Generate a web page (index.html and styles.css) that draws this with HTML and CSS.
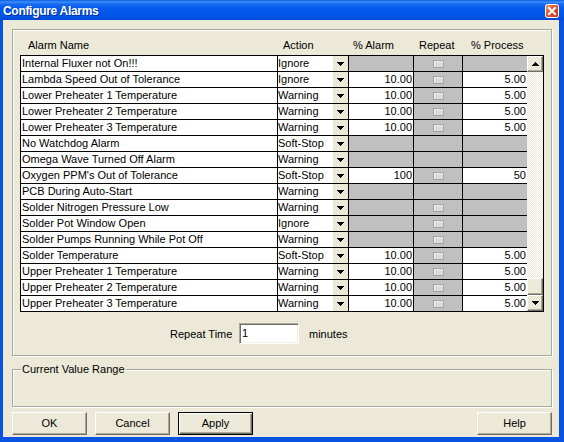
FILE: index.html
```html
<!DOCTYPE html>
<html>
<head>
<meta charset="utf-8">
<title>Configure Alarms</title>
<link rel="stylesheet" href="styles.css">
</head>
<body>
<div class="window">
  <div class="titlebar">
    <span class="title">Configure Alarms</span>
    <span class="close">
      <svg width="14" height="14" viewBox="0 0 14 14">
        <defs>
          <linearGradient id="cg" x1="0" y1="0" x2="1" y2="1">
            <stop offset="0" stop-color="#f29a7c"/>
            <stop offset="0.45" stop-color="#e0532f"/>
            <stop offset="1" stop-color="#c23a12"/>
          </linearGradient>
        </defs>
        <rect x="0.5" y="0.5" width="13" height="13" rx="2" fill="url(#cg)" stroke="#fff"/>
        <path d="M4 4L10 10M10 4L4 10" stroke="#fff" stroke-width="2" stroke-linecap="square"/>
      </svg>
    </span>
  </div>
  <div class="client">
    <div class="group main-group">
      <div class="grid-head">
        <div class="h h-name">Alarm Name</div>
        <div class="h h-action">Action</div>
        <div class="h h-alarm">% Alarm</div>
        <div class="h h-repeat">Repeat</div>
        <div class="h h-process">% Process</div>
      </div>
      <div class="grid">
        <div class="scroll">
          <div class="sb-btn"><svg width="7" height="4" viewBox="0 0 7 4" shape-rendering="crispEdges"><path d="M3 0h1v1h1v1h1v1h1v1h-7v-1h1v-1h1v-1h1z" fill="#000"/></svg></div>
          <div class="sb-track"><div class="sb-thumb"></div></div>
          <div class="sb-btn"><svg width="7" height="4" viewBox="0 0 7 4" shape-rendering="crispEdges"><path d="M0 0h7v1h-1v1h-1v1h-1v1h-1v-1h-1v-1h-1v-1h-1z" fill="#000"/></svg></div>
        </div>

        <div class="c name">Internal Fluxer not On!!!</div>
        <div class="c act"><span>Ignore</span><i class="dd"><svg width="7" height="4" viewBox="0 0 7 4" shape-rendering="crispEdges"><path d="M0 0h7v1h-1v1h-1v1h-1v1h-1v-1h-1v-1h-1v-1h-1z"/></svg></i></div>
        <div class="c g"></div>
        <div class="c rep"><i class="chk"></i></div>
        <div class="c g proc"></div>

        <div class="c name">Lambda Speed Out of Tolerance</div>
        <div class="c act"><span>Ignore</span><i class="dd"><svg width="7" height="4" viewBox="0 0 7 4" shape-rendering="crispEdges"><path d="M0 0h7v1h-1v1h-1v1h-1v1h-1v-1h-1v-1h-1v-1h-1z"/></svg></i></div>
        <div class="c num">10.00</div>
        <div class="c rep"><i class="chk"></i></div>
        <div class="c num proc">5.00</div>

        <div class="c name">Lower Preheater 1 Temperature</div>
        <div class="c act"><span>Warning</span><i class="dd"><svg width="7" height="4" viewBox="0 0 7 4" shape-rendering="crispEdges"><path d="M0 0h7v1h-1v1h-1v1h-1v1h-1v-1h-1v-1h-1v-1h-1z"/></svg></i></div>
        <div class="c num">10.00</div>
        <div class="c rep"><i class="chk"></i></div>
        <div class="c num proc">5.00</div>

        <div class="c name">Lower Preheater 2 Temperature</div>
        <div class="c act"><span>Warning</span><i class="dd"><svg width="7" height="4" viewBox="0 0 7 4" shape-rendering="crispEdges"><path d="M0 0h7v1h-1v1h-1v1h-1v1h-1v-1h-1v-1h-1v-1h-1z"/></svg></i></div>
        <div class="c num">10.00</div>
        <div class="c rep"><i class="chk"></i></div>
        <div class="c num proc">5.00</div>

        <div class="c name">Lower Preheater 3 Temperature</div>
        <div class="c act"><span>Warning</span><i class="dd"><svg width="7" height="4" viewBox="0 0 7 4" shape-rendering="crispEdges"><path d="M0 0h7v1h-1v1h-1v1h-1v1h-1v-1h-1v-1h-1v-1h-1z"/></svg></i></div>
        <div class="c num">10.00</div>
        <div class="c rep"><i class="chk"></i></div>
        <div class="c num proc">5.00</div>

        <div class="c name">No Watchdog Alarm</div>
        <div class="c act"><span>Soft-Stop</span><i class="dd"><svg width="7" height="4" viewBox="0 0 7 4" shape-rendering="crispEdges"><path d="M0 0h7v1h-1v1h-1v1h-1v1h-1v-1h-1v-1h-1v-1h-1z"/></svg></i></div>
        <div class="c g"></div>
        <div class="c rep"></div>
        <div class="c g proc"></div>

        <div class="c name">Omega Wave Turned Off Alarm</div>
        <div class="c act"><span>Warning</span><i class="dd"><svg width="7" height="4" viewBox="0 0 7 4" shape-rendering="crispEdges"><path d="M0 0h7v1h-1v1h-1v1h-1v1h-1v-1h-1v-1h-1v-1h-1z"/></svg></i></div>
        <div class="c g"></div>
        <div class="c rep"></div>
        <div class="c g proc"></div>

        <div class="c name">Oxygen PPM's Out of Tolerance</div>
        <div class="c act"><span>Soft-Stop</span><i class="dd"><svg width="7" height="4" viewBox="0 0 7 4" shape-rendering="crispEdges"><path d="M0 0h7v1h-1v1h-1v1h-1v1h-1v-1h-1v-1h-1v-1h-1z"/></svg></i></div>
        <div class="c num">100</div>
        <div class="c rep"><i class="chk"></i></div>
        <div class="c num proc">50</div>

        <div class="c name">PCB During Auto-Start</div>
        <div class="c act"><span>Warning</span><i class="dd"><svg width="7" height="4" viewBox="0 0 7 4" shape-rendering="crispEdges"><path d="M0 0h7v1h-1v1h-1v1h-1v1h-1v-1h-1v-1h-1v-1h-1z"/></svg></i></div>
        <div class="c g"></div>
        <div class="c rep"></div>
        <div class="c g proc"></div>

        <div class="c name">Solder Nitrogen Pressure Low</div>
        <div class="c act"><span>Warning</span><i class="dd"><svg width="7" height="4" viewBox="0 0 7 4" shape-rendering="crispEdges"><path d="M0 0h7v1h-1v1h-1v1h-1v1h-1v-1h-1v-1h-1v-1h-1z"/></svg></i></div>
        <div class="c g"></div>
        <div class="c rep"><i class="chk"></i></div>
        <div class="c g proc"></div>

        <div class="c name">Solder Pot Window Open</div>
        <div class="c act"><span>Ignore</span><i class="dd"><svg width="7" height="4" viewBox="0 0 7 4" shape-rendering="crispEdges"><path d="M0 0h7v1h-1v1h-1v1h-1v1h-1v-1h-1v-1h-1v-1h-1z"/></svg></i></div>
        <div class="c g"></div>
        <div class="c rep"><i class="chk"></i></div>
        <div class="c g proc"></div>

        <div class="c name">Solder Pumps Running While Pot Off</div>
        <div class="c act"><span>Warning</span><i class="dd"><svg width="7" height="4" viewBox="0 0 7 4" shape-rendering="crispEdges"><path d="M0 0h7v1h-1v1h-1v1h-1v1h-1v-1h-1v-1h-1v-1h-1z"/></svg></i></div>
        <div class="c g"></div>
        <div class="c rep"><i class="chk"></i></div>
        <div class="c g proc"></div>

        <div class="c name">Solder Temperature</div>
        <div class="c act"><span>Soft-Stop</span><i class="dd"><svg width="7" height="4" viewBox="0 0 7 4" shape-rendering="crispEdges"><path d="M0 0h7v1h-1v1h-1v1h-1v1h-1v-1h-1v-1h-1v-1h-1z"/></svg></i></div>
        <div class="c num">10.00</div>
        <div class="c rep"><i class="chk"></i></div>
        <div class="c num proc">5.00</div>

        <div class="c name">Upper Preheater 1 Temperature</div>
        <div class="c act"><span>Warning</span><i class="dd"><svg width="7" height="4" viewBox="0 0 7 4" shape-rendering="crispEdges"><path d="M0 0h7v1h-1v1h-1v1h-1v1h-1v-1h-1v-1h-1v-1h-1z"/></svg></i></div>
        <div class="c num">10.00</div>
        <div class="c rep"><i class="chk"></i></div>
        <div class="c num proc">5.00</div>

        <div class="c name">Upper Preheater 2 Temperature</div>
        <div class="c act"><span>Warning</span><i class="dd"><svg width="7" height="4" viewBox="0 0 7 4" shape-rendering="crispEdges"><path d="M0 0h7v1h-1v1h-1v1h-1v1h-1v-1h-1v-1h-1v-1h-1z"/></svg></i></div>
        <div class="c num">10.00</div>
        <div class="c rep"><i class="chk"></i></div>
        <div class="c num proc">5.00</div>

        <div class="c name">Upper Preheater 3 Temperature</div>
        <div class="c act"><span>Warning</span><i class="dd"><svg width="7" height="4" viewBox="0 0 7 4" shape-rendering="crispEdges"><path d="M0 0h7v1h-1v1h-1v1h-1v1h-1v-1h-1v-1h-1v-1h-1z"/></svg></i></div>
        <div class="c num">10.00</div>
        <div class="c rep"><i class="chk"></i></div>
        <div class="c num proc">5.00</div>
      </div>
      <div class="repeat-row">
        <span class="rt-label">Repeat Time</span>
        <span class="input">1</span>
        <span class="rt-unit">minutes</span>
      </div>
    </div>
    <fieldset class="range">
      <legend>Current Value Range</legend>
      <div class="range-body"></div>
    </fieldset>
    <div class="buttons">
      <div class="btn">OK</div>
      <div class="btn">Cancel</div>
      <div class="btn default">Apply</div>
      <div class="btn help">Help</div>
    </div>
  </div>
</div>
</body>
</html>
```

FILE: styles.css
```css
* { box-sizing: border-box; }
html, body { margin: 0; padding: 0; }
body {
  width: 564px;
  height: 442px;
  overflow: hidden;
  font-family: "Liberation Sans", Arial, sans-serif;
  font-size: 11px;
  color: #000;
  background: #0a50e0;
}
.window {
  width: 564px;
  height: 442px;
  display: flex;
  flex-direction: column;
  background: #0a52e2;
}
.titlebar {
  height: 20px;
  flex: none;
  display: flex;
  align-items: center;
  padding: 0 5px 0 3px;
  background: linear-gradient(to bottom, #0a5fe6 0px, #3d8ef7 2px, #1a6af0 4px, #0058ee 9px, #0055e8 16px, #0048d6 20px);
}
.title {
  flex: 1;
  color: #fff;
  font-weight: bold;
  font-size: 12px;
  letter-spacing: -0.3px;
  line-height: 20px;
  padding-top: 1px;
  text-shadow: 1px 1px 0 rgba(0, 20, 110, 0.6);
}
.close { display: flex; width: 14px; height: 14px; margin-top: 1px; }
.client {
  flex: 1;
  margin: 0 5px 5px 3px;
  background: #ece9d8;
  padding: 9px 0 0 9px;
}
.group {
  border: 1px solid #aca899;
  box-shadow: 1px 1px 0 #fff, inset 1px 1px 0 #fff;
}
.main-group {
  width: 540px;
  height: 327px;
  padding: 0 0 0 7px;
}
.grid-head {
  display: grid;
  grid-template-columns: 258px 71px 65px 49px 81px;
  height: 25px;
  padding-top: 7px;
  line-height: 17px;
}
.h-name { padding-left: 8px; }
.h-action { padding-left: 5px; }
.h-alarm { padding-left: 4px; }
.h-repeat { padding-left: 5px; }
.h-process { padding-left: 8px; }

.grid {
  display: grid;
  width: 524px;
  grid-template-columns: 257px 71px 65px 49px 64px 16px;
  grid-auto-rows: 16px;
  border: 1px solid #000;
  border-bottom: 0;
}
.c {
  border-right: 1px solid #000;
  border-bottom: 1px solid #000;
  line-height: 15px;
  white-space: nowrap;
  overflow: hidden;
  background: #fff;
}
.name { padding-left: 1px; }
.act { display: flex; }
.act span { flex: 1; }
.dd {
  width: 15px;
  height: 15px;
  background: #ece9d8;
  display: flex;
  align-items: center;
  justify-content: center;
}
.num { text-align: right; padding-right: 1px; }
.g { background: #c0c0c0; }
.rep {
  background: #c0c0c0;
  display: flex;
  align-items: center;
  justify-content: center;
}
.chk {
  width: 11px;
  height: 8px;
  background: #dcdcdc;
  border: 1px solid #a4a4a4;
  box-shadow: inset 1px 1px 0 #ececec;
}
.proc { border-right: 0; }

.scroll {
  grid-column: 6;
  grid-row: 1 / span 16;
  display: flex;
  flex-direction: column;
  border-bottom: 1px solid #000;
}
.sb-btn {
  height: 16px;
  flex: none;
  background: #ece9d8;
  border: 1px solid;
  border-color: #fff #716f64 #716f64 #fff;
  box-shadow: inset -1px -1px 0 #aca899;
  display: flex;
  align-items: center;
  justify-content: center;
}
.sb-track {
  flex: 1;
  display: flex;
  flex-direction: column;
  justify-content: flex-end;
  background: repeating-conic-gradient(#ffffff 0 25%, #ece9d8 0 50%) 0 0 / 2px 2px;
}
.sb-thumb {
  height: 17px;
  background: #ece9d8;
  border: 1px solid;
  border-color: #fff #716f64 #716f64 #fff;
  box-shadow: inset -1px -1px 0 #aca899;
}

.repeat-row {
  display: flex;
  align-items: center;
  height: 21px;
  margin-top: 11px;
  padding-left: 150px;
}
.rt-label { width: 69px; }
.input {
  width: 60px;
  height: 21px;
  background: #fff;
  border: 1px solid;
  border-color: #aca899 #fff #fff #aca899;
  box-shadow: inset 1px 1px 0 #716f64, inset -1px -1px 0 #f1efe2;
  padding-left: 2px;
  line-height: 19px;
}
.rt-unit { margin-left: 10px; }

.range {
  width: 540px;
  margin: 7px 0 0 0;
  padding: 0 0 0 8px;
  border: 1px solid #aca899;
  box-shadow: 1px 1px 0 #fff, inset 1px 1px 0 #fff;
  min-width: 0;
}
.range legend {
  padding: 0 1px;
  line-height: 13px;
  background: #ece9d8;
}
.range-body { height: 30px; }

.buttons {
  display: flex;
  width: 540px;
  margin-top: 5px;
}
.btn {
  width: 75px;
  height: 23px;
  margin-right: 8px;
  background: #ece9d8;
  border: 1px solid;
  border-color: #fff #716f64 #716f64 #fff;
  box-shadow: inset -1px -1px 0 #aca899;
  text-align: center;
  line-height: 21px;
}
.btn.default {
  border-color: #000;
  box-shadow: inset 1px 1px 0 #fff, inset -1px -1px 0 #716f64, inset -2px -2px 0 #aca899;
}
.btn.help { margin-left: auto; margin-right: 0; }
```
